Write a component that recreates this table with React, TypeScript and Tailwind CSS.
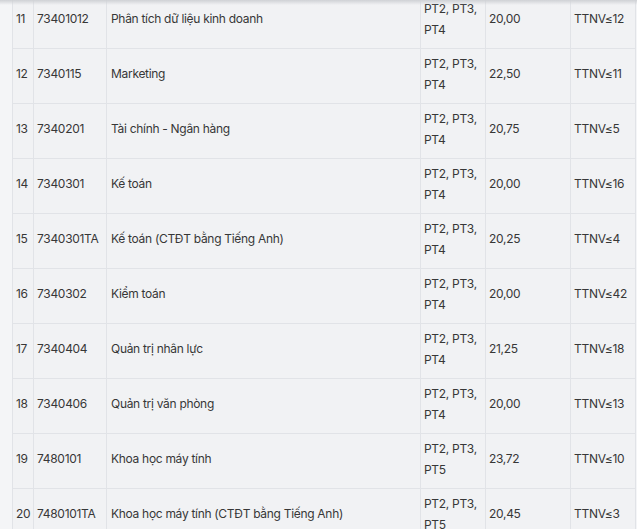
import React from 'react';

interface Row {
    stt: number;
    code: string;
    name: string;
    methods: string[];
    score: string;
    rule: string;
}

const rows: Row[] = [
    { stt: 11, code: '73401012', name: 'Phân tích dữ liệu kinh doanh', methods: ['PT2, PT3,', 'PT4'], score: '20,00', rule: 'TTNV≤12' },
    { stt: 12, code: '7340115', name: 'Marketing', methods: ['PT2, PT3,', 'PT4'], score: '22,50', rule: 'TTNV≤11' },
    { stt: 13, code: '7340201', name: 'Tài chính - Ngân hàng', methods: ['PT2, PT3,', 'PT4'], score: '20,75', rule: 'TTNV≤5' },
    { stt: 14, code: '7340301', name: 'Kế toán', methods: ['PT2, PT3,', 'PT4'], score: '20,00', rule: 'TTNV≤16' },
    { stt: 15, code: '7340301TA', name: 'Kế toán (CTĐT bằng Tiếng Anh)', methods: ['PT2, PT3,', 'PT4'], score: '20,25', rule: 'TTNV≤4' },
    { stt: 16, code: '7340302', name: 'Kiểm toán', methods: ['PT2, PT3,', 'PT4'], score: '20,00', rule: 'TTNV≤42' },
    { stt: 17, code: '7340404', name: 'Quản trị nhân lực', methods: ['PT2, PT3,', 'PT4'], score: '21,25', rule: 'TTNV≤18' },
    { stt: 18, code: '7340406', name: 'Quản trị văn phòng', methods: ['PT2, PT3,', 'PT4'], score: '20,00', rule: 'TTNV≤13' },
    { stt: 19, code: '7480101', name: 'Khoa học máy tính', methods: ['PT2, PT3,', 'PT5'], score: '23,72', rule: 'TTNV≤10' },
    { stt: 20, code: '7480101TA', name: 'Khoa học máy tính (CTĐT bằng Tiếng Anh)', methods: ['PT2, PT3,', 'PT5'], score: '20,45', rule: 'TTNV≤3' },
];

const cell = 'border border-[#e1e3e7] px-[3px] pt-0 pb-[5px] align-middle whitespace-nowrap overflow-hidden';

export default function App() {
    return (
        <div
            className="relative h-[529px] w-[637px] overflow-hidden bg-[#f4f5f7] pl-[12px] text-[12px] tracking-[-0.3px] text-[#373737]"
            style={{ fontFamily: 'Inter, "Noto Sans", sans-serif' }}
        >
            {/* top shadow */}
            <div className="pointer-events-none absolute inset-x-0 top-0 z-10 h-[5px] bg-gradient-to-b from-[#cfd1d5] to-transparent" />

            <table className="-mt-[7px] w-[623px] table-fixed border-collapse bg-[#f1f2f4]">
                <colgroup>
                    <col className="w-[21px]" />
                    <col className="w-[73px]" />
                    <col className="w-[314px]" />
                    <col className="w-[65px]" />
                    <col className="w-[85px]" />
                    <col className="w-[65px]" />
                </colgroup>
                <tbody>
                    {rows.map((r) => (
                        <tr key={r.stt} className="h-[55px]">
                            <td className={cell}>{r.stt}</td>
                            <td className={cell}>{r.code}</td>
                            <td className={cell + ' pl-[4px]'}>{r.name}</td>
                            <td className={cell + ' leading-[21px]'}>
                                {r.methods[0]}
                                <br />
                                {r.methods[1]}
                            </td>
                            <td className={cell}>{r.score}</td>
                            <td className={cell}>{r.rule}</td>
                        </tr>
                    ))}
                </tbody>
            </table>
        </div>
    );
}
